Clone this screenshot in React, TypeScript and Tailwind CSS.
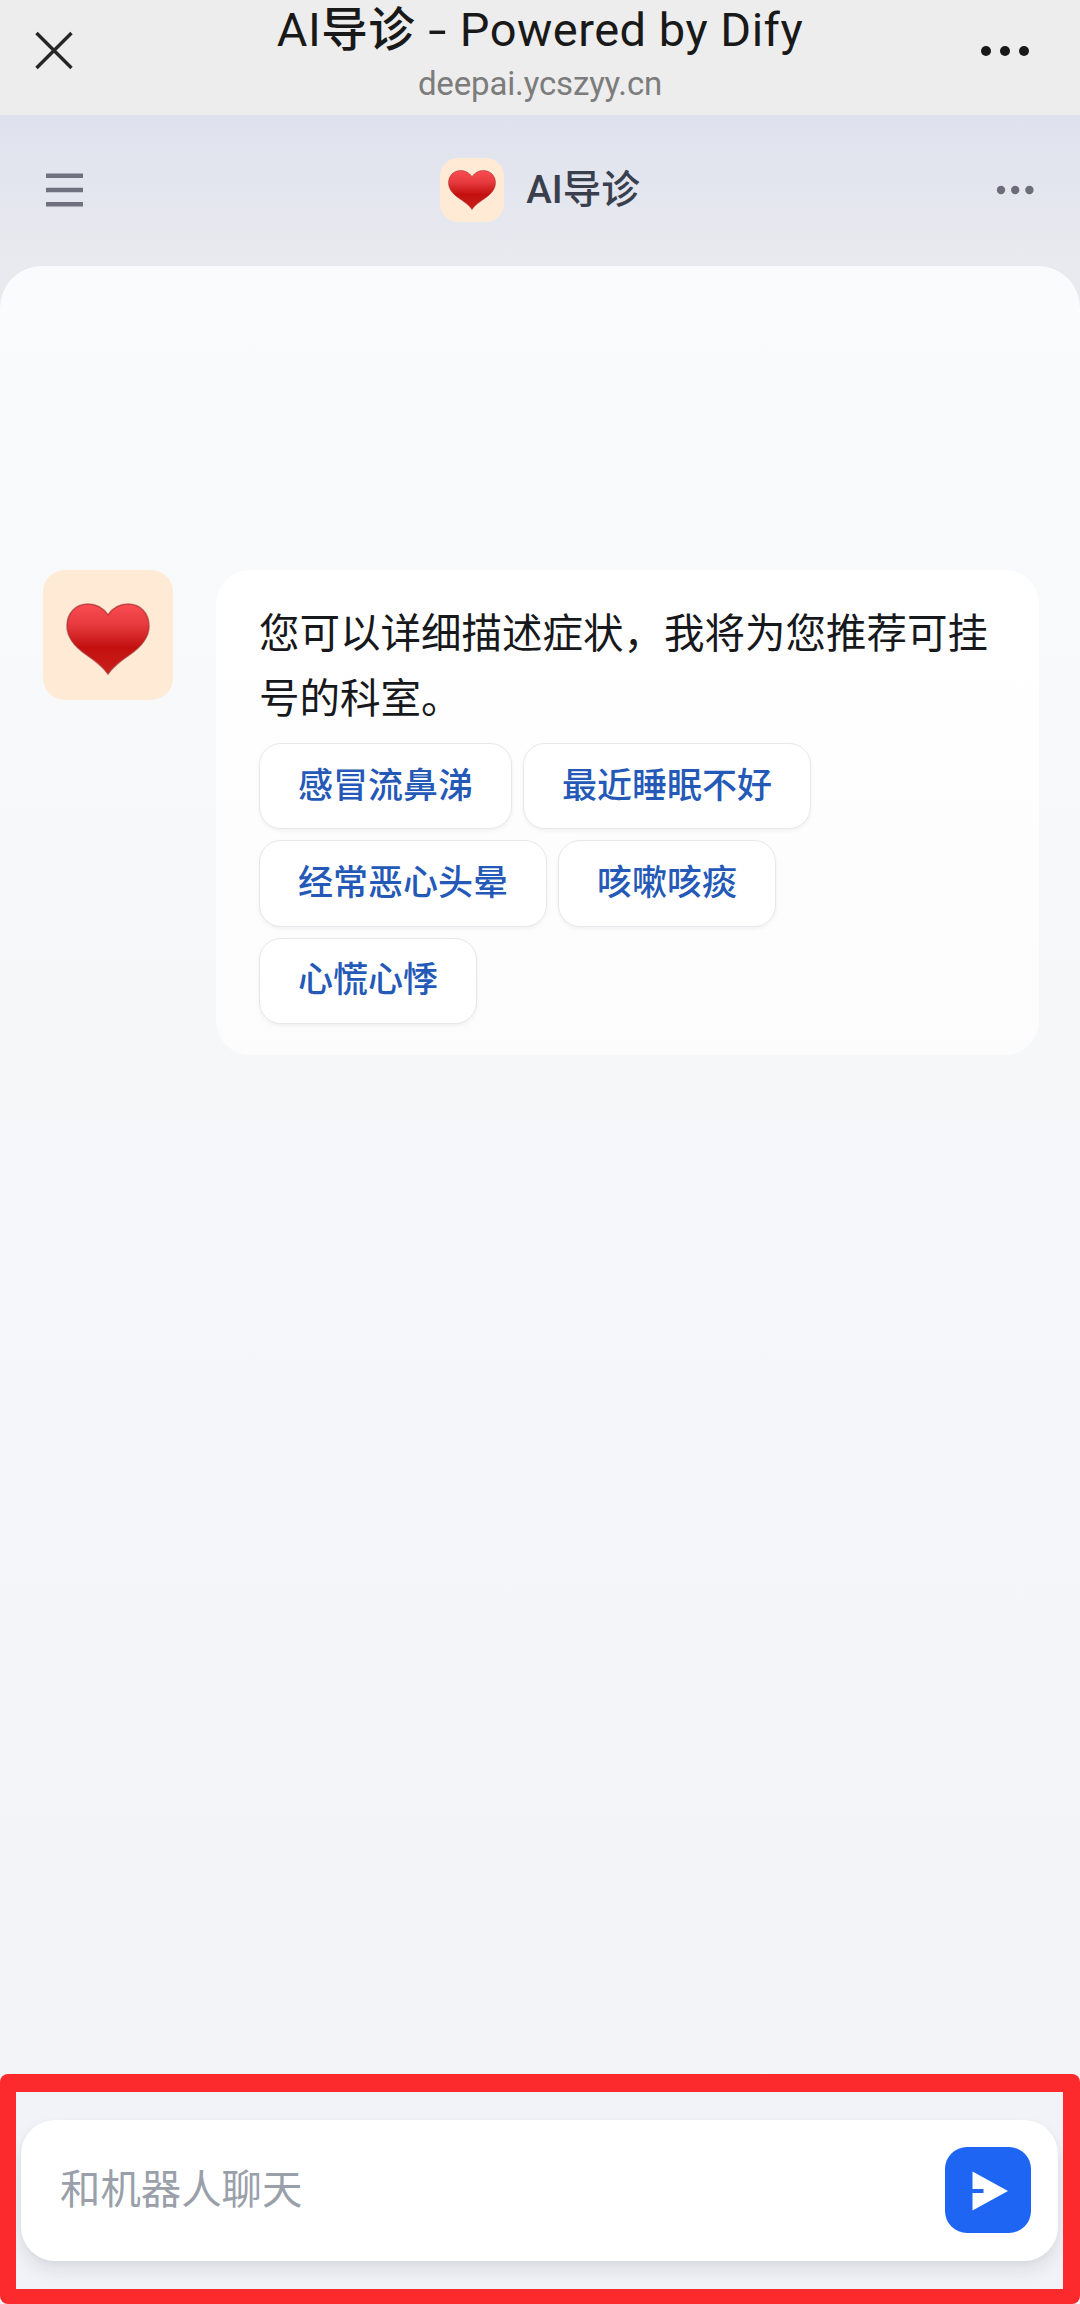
import { useState } from 'react';

const suggestions = ['感冒流鼻涕', '最近睡眠不好', '经常恶心头晕', '咳嗽咳痰', '心慌心悸'];

function Heart({ id, className }: { id: string; className: string }) {
    return (
        <svg viewBox="0 0 84 72" preserveAspectRatio="none" className={className}>
            <defs>
                <linearGradient id={id} x1="0" y1="0" x2="0" y2="1">
                    <stop offset="0" stopColor="#fb4d52" />
                    <stop offset="0.3" stopColor="#e63a3e" />
                    <stop offset="0.62" stopColor="#c3100f" />
                    <stop offset="1" stopColor="#c9201c" />
                </linearGradient>
            </defs>
            <path
                d="M42 12C37 4.500 30 1 22 1C10 1 1 10 1 23C1 34 8 43 20 51.500C31 59 37 64 42 71C47 64 53 59 64 51.500C76 43 83 34 83 23C83 10 74 1 62 1C54 1 47 4.500 42 12Z"
                fill={`url(#${id})`}
                stroke="#a52b2b"
                strokeOpacity="0.65"
                strokeWidth="1.5"
            />
        </svg>
    );
}

function BrowserBar() {
    return (
        <div className="grid h-[115px] shrink-0 grid-cols-[100px_1fr_100px] items-start bg-[#ededed] pr-[50px] pl-[35px]">
            <button className="mt-[31px]" aria-label="关闭">
                <svg viewBox="0 0 38 39" className="h-[39px] w-[38px]">
                    <path d="M1.500 2L36.500 37M36.500 2L1.500 37" stroke="#262626" strokeWidth="3.4" fill="none" />
                </svg>
            </button>
            <div className="flex flex-col items-center pl-[15px]">
                <h1 className="mt-[-3px] h-[65px] text-[47px] leading-[66px] font-normal tracking-[0.5px] whitespace-nowrap text-[#191919]">
                    AI<span className="text-[46.5px] font-medium">导诊</span>
                    <span className="mx-[15.500px] inline-block scale-x-140">-</span>
                    Powered by Dify
                </h1>
                <p className="h-[44px] text-[33px] leading-[44px] tracking-[-0.15px] text-[#7c7c7c]">deepai.ycszyy.cn</p>
            </div>
            <button className="mt-[45px] justify-self-end" aria-label="更多">
                <svg viewBox="0 0 50 12" className="h-3 w-[50px]" fill="#191919">
                    <circle cx="6" cy="6" r="5" />
                    <circle cx="25" cy="6" r="5" />
                    <circle cx="44" cy="6" r="5" />
                </svg>
            </button>
        </div>
    );
}

function ChatHeader() {
    return (
        <header className="flex h-[151px] shrink-0 items-center justify-between px-[46px] pb-[2px]">
            <button aria-label="菜单">
                <svg viewBox="0 0 37 34" className="h-[34px] w-[37px]" fill="#70717f">
                    <rect y="0.500" width="37" height="4.500" />
                    <rect y="14.750" width="37" height="4.500" />
                    <rect y="29" width="37" height="4.500" />
                </svg>
            </button>
            <div className="flex items-center gap-[22px] pl-px">
                <div className="flex size-16 items-center justify-center rounded-[18px] bg-[#ffead5]">
                    <Heart id="heart-small" className="h-10 w-12" />
                </div>
                <h2 className="text-[38.5px] leading-[56px] font-medium text-[#3a3f4e]">AI导诊</h2>
            </div>
            <button aria-label="更多选项">
                <svg viewBox="0 0 38 10" className="h-[10px] w-[38px]" fill="#6c6d78">
                    <circle cx="5" cy="5" r="4.200" />
                    <circle cx="19.200" cy="5" r="4.200" />
                    <circle cx="33.400" cy="5" r="4.200" />
                </svg>
            </button>
        </header>
    );
}

export default function App() {
    const [message, setMessage] = useState('');

    return (
        <div className="flex h-[2304px] w-[1080px] flex-col overflow-hidden bg-[#f2f4f8] font-[Roboto,'Noto_Sans_CJK_SC',sans-serif]">
            <BrowserBar />
            <div className="flex flex-1 flex-col bg-linear-to-b from-[#dfe2ee] via-[#e9eaef] via-[150px] to-[#ebecf0]">
                <ChatHeader />
                <main className="flex flex-1 flex-col justify-between rounded-t-[42px] bg-linear-to-b from-[#fafbfd] via-[#f6f7f9] via-40% to-[#f1f3f8]">
                    <div className="flex items-start gap-[43px] pt-[304px] pr-[41px] pl-[43px]">
                        <div className="flex size-[130px] shrink-0 items-center justify-center rounded-[22px] bg-[#ffead5]">
                            <Heart id="heart-large" className="mt-[8px] h-[72px] w-[84px]" />
                        </div>
                        <div className="h-[485px] flex-1 rounded-[34px] bg-linear-to-b from-white to-[#fcfcfd] pt-[32px] pl-[43px]">
                            <p className="w-[736px] text-[40.5px] leading-[65px] text-[#17181c]">
                                您可以详细描述症状，我将为您推荐可挂号的科室。
                            </p>
                            <div className="mt-[11px] flex w-[600px] flex-wrap gap-x-[11px] gap-y-[11px]">
                                {suggestions.map((text) => (
                                    <button
                                        key={text}
                                        className="h-[86.4px] rounded-[22px] border-[1.5px] border-[#e8e8ec] bg-white px-[38px] pt-px text-[35px] leading-[50px] font-medium text-[#2459b8] shadow-[0_2px_4px_rgba(16,24,40,0.05)]"
                                    >
                                        {text}
                                    </button>
                                ))}
                            </div>
                        </div>
                    </div>

                    <div className="h-[230px] rounded-[8px] bg-[#fd2a2d] pt-[18px] pr-[17px] pb-[15px] pl-[16px]">
                        <div className="h-full overflow-hidden bg-[#f2f3f8] px-[5px] pt-7">
                            <div className="flex h-[141px] items-center justify-between rounded-[34px] bg-white pr-[27px] pl-[39px] shadow-[0_10px_18px_rgba(16,24,40,0.09),0_2px_6px_rgba(16,24,40,0.04)]">
                                <input
                                    value={message}
                                    onChange={(e) => setMessage(e.target.value)}
                                    placeholder="和机器人聊天"
                                    className="h-[70px] flex-1 pb-px text-[40.4px] outline-none placeholder:text-[#9aa0aa]"
                                />
                                <button
                                    aria-label="发送"
                                    className="mb-px flex size-[86px] items-center justify-center rounded-[22px] bg-[#1d65f2]"
                                >
                                    <svg viewBox="0 0 36 40" className="mt-px ml-[3px] h-10 w-9" fill="#fff">
                                        <path d="M0.500 0.500L36 20L0.500 39.500V22H11.500V18H0.500Z" />
                                    </svg>
                                </button>
                            </div>
                        </div>
                    </div>
                </main>
            </div>
        </div>
    );
}
